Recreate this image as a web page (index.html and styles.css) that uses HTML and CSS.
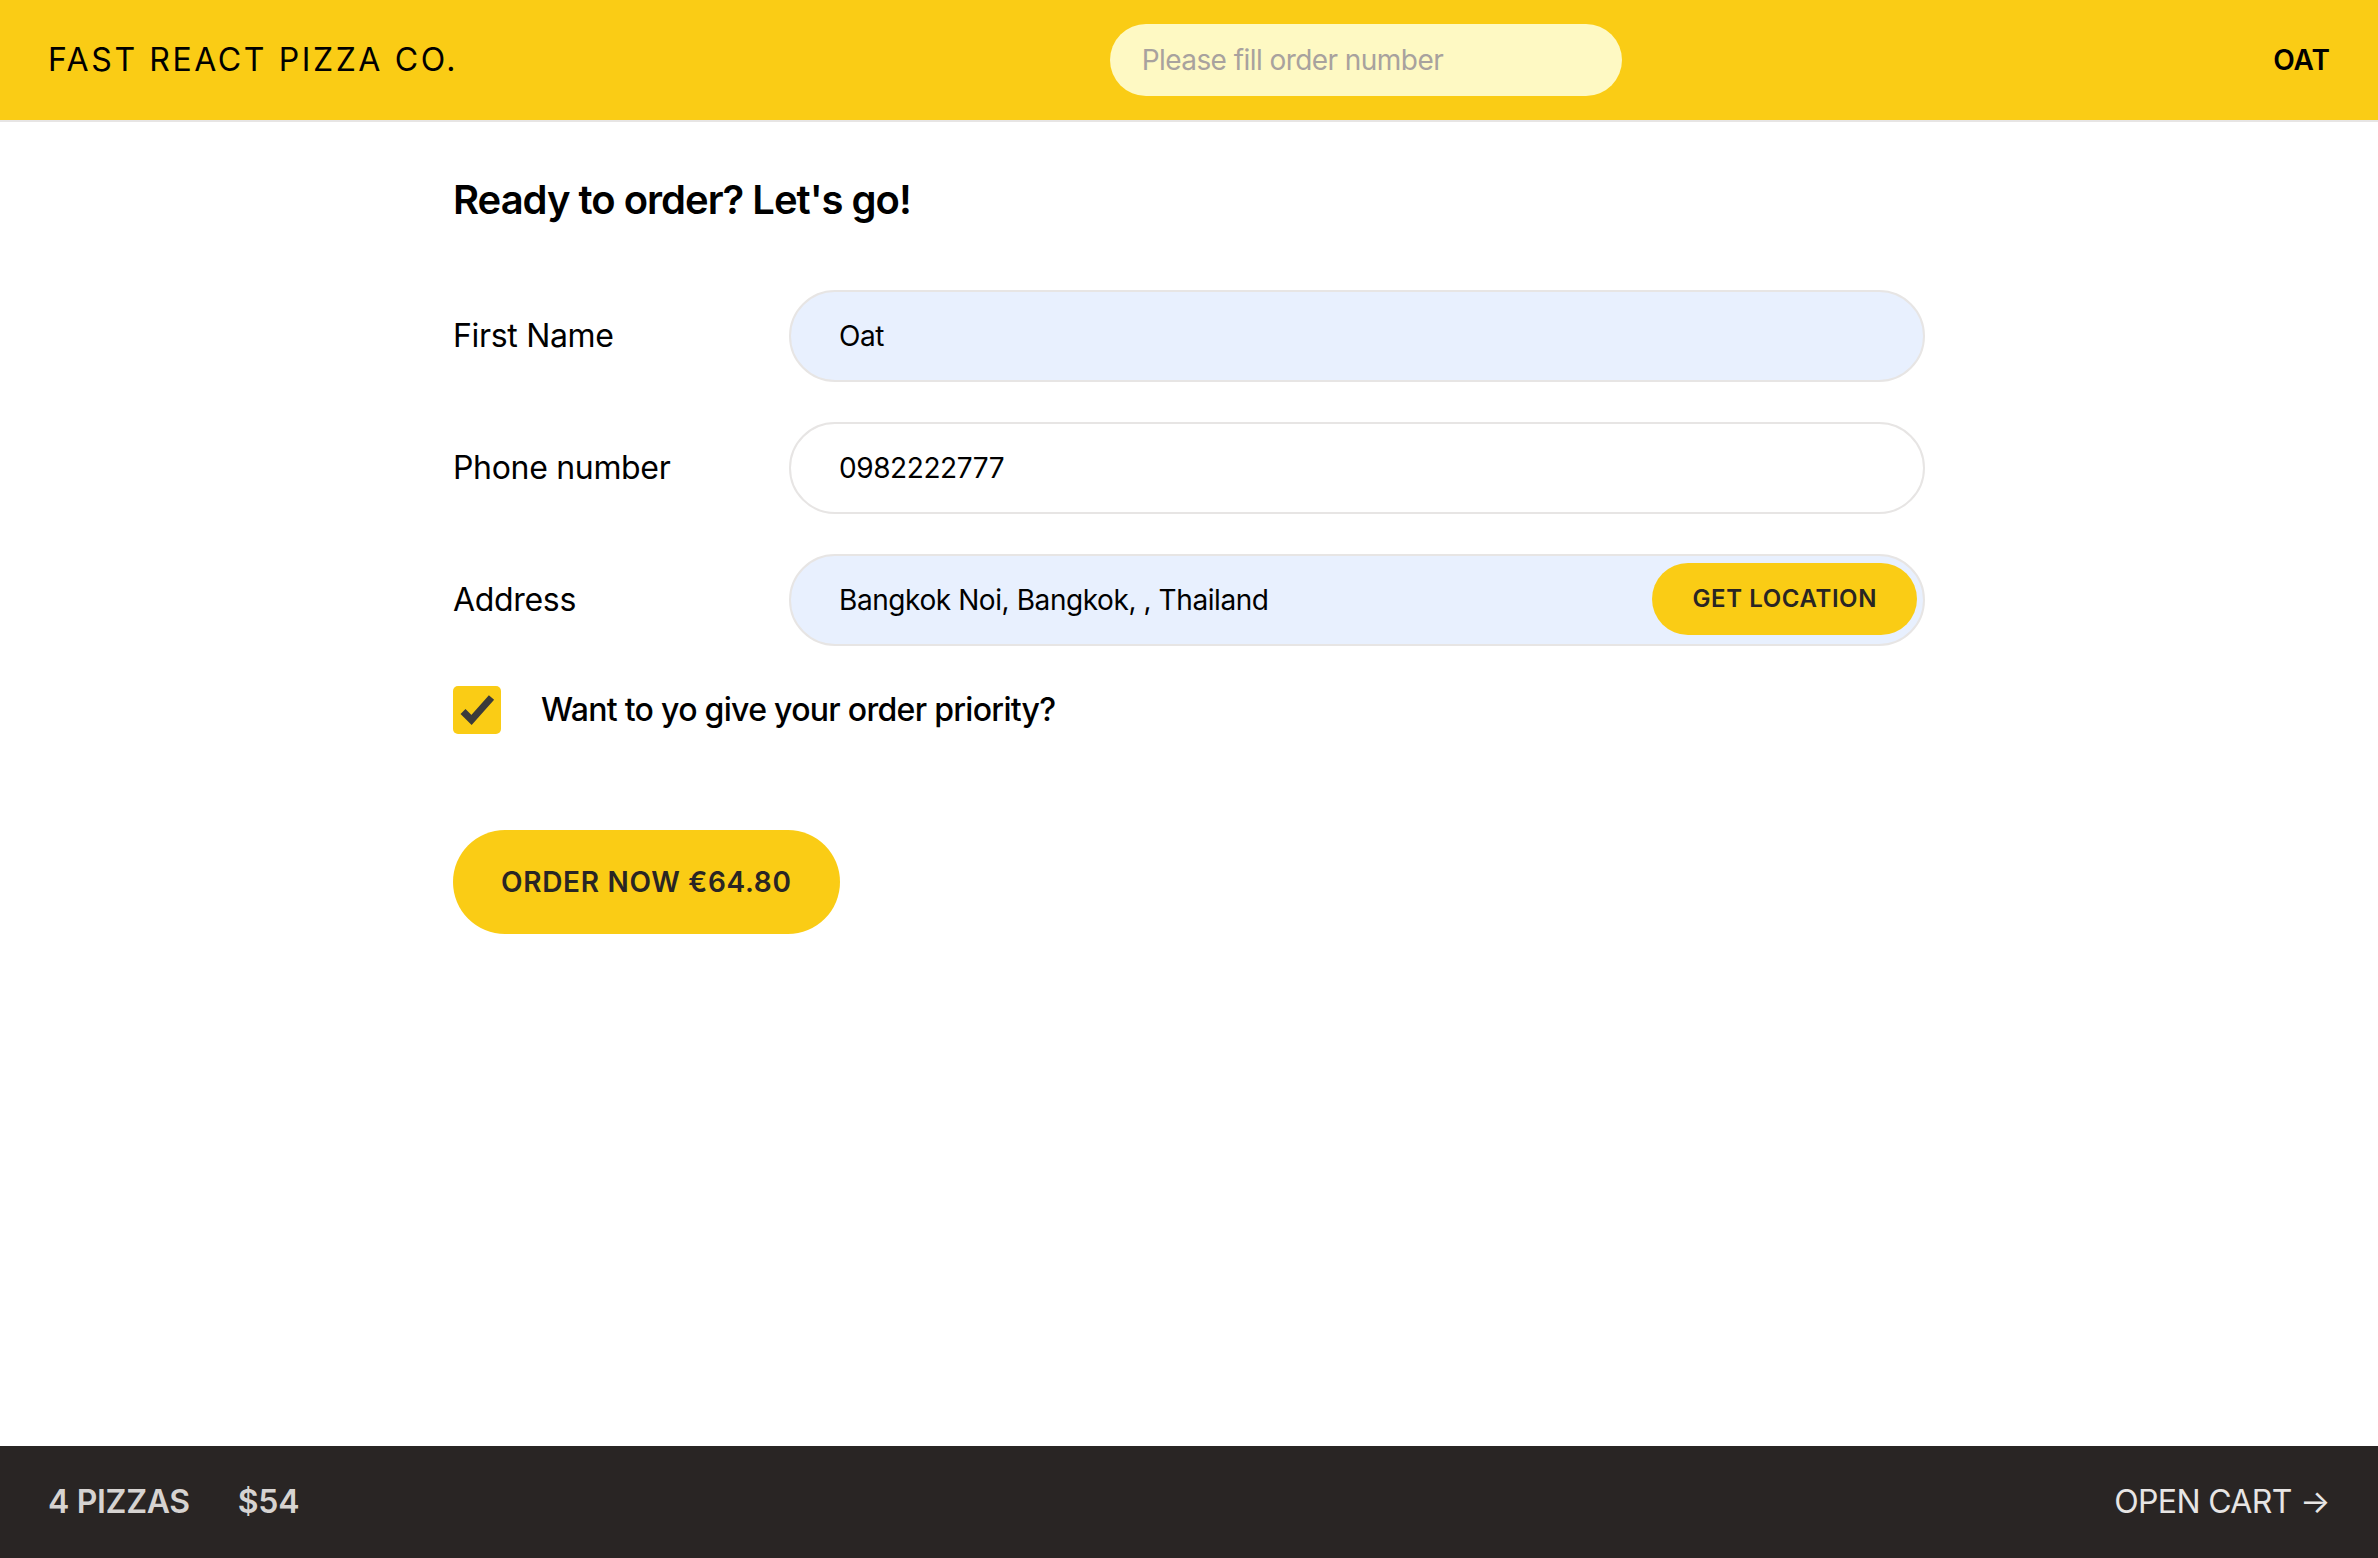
FILE: index.html
```html
<!DOCTYPE html>
<html lang="en">
<head>
<meta charset="utf-8">
<title>Fast React Pizza Co.</title>
<link rel="stylesheet" href="styles.css">
</head>
<body>
<div class="layout">
  <header class="header">
    <a class="logo" href="#">Fast React Pizza Co.</a>
    <form class="search">
      <input class="search-input" type="text" placeholder="Please fill order number">
    </form>
    <div class="username">Oat</div>
  </header>

  <main class="main">
    <h2 class="title">Ready to order? Let's go!</h2>
    <form class="order-form">
      <div class="row">
        <label class="row-label">First Name</label>
        <div class="row-field">
          <input class="input input-autofill" type="text" value="Oat">
        </div>
      </div>
      <div class="row">
        <label class="row-label">Phone number</label>
        <div class="row-field">
          <input class="input" type="tel" value="0982222777">
        </div>
      </div>
      <div class="row">
        <label class="row-label">Address</label>
        <div class="row-field row-field-rel">
          <input class="input input-autofill" type="text" value="Bangkok Noi, Bangkok, , Thailand">
          <span class="loc-btn">Get location</span>
        </div>
      </div>
      <div class="priority">
        <span class="checkbox">
          <svg viewBox="0 0 48 48" width="48" height="48"><polyline points="10,25.5 18.5,34 38.5,11.5" fill="none" stroke="#3b3b3b" stroke-width="7" stroke-linejoin="miter"/></svg>
        </span>
        <label class="priority-label">Want to yo give your order priority?</label>
      </div>
      <div>
        <span class="order-btn">Order now €64.80</span>
      </div>
    </form>
  </main>

  <footer class="cart">
    <p class="cart-summary">
      <span class="cart-count">4 pizzas</span>
      <span class="cart-total">$54</span>
    </p>
    <a class="cart-link" href="#">Open cart &rarr;</a>
  </footer>
</div>
</body>
</html>
```

FILE: styles.css
```css
* { box-sizing: border-box; }
html, body { margin: 0; padding: 0; }
body {
  font-family: Inter, "Noto Sans", sans-serif;
  color: #000;
  background: #fff;
  letter-spacing: -0.02em;
}
.layout {
  display: grid;
  grid-template-rows: auto 1fr auto;
  height: 1558px;
}
.header {
  display: flex;
  align-items: center;
  justify-content: space-between;
  background: #facc15;
  padding: 24px 48px;
  border-bottom: 2px solid #e7e5e4;
}
.logo {
  font-size: 32px;
  line-height: 48px;
  letter-spacing: 2.6px;
  text-transform: uppercase;
  color: #000;
  text-decoration: none;
}
.search { margin: 0; }
.search-input {
  display: block;
  width: 512px;
  height: 72px;
  border: none;
  border-radius: 9999px;
  background: #fef9c3;
  padding: 0 32px;
  font-family: Inter, sans-serif;
  font-size: 28px;
  letter-spacing: -0.02em;
  color: #292524;
  outline: none;
}
.search-input::placeholder { color: #a8a29e; }
.username {
  font-size: 28px;
  font-weight: 600;
  text-transform: uppercase;
  line-height: 40px;
  letter-spacing: 0;
}
.main {
  width: 100%;
  max-width: 1536px;
  margin: 0 auto;
  padding: 48px 32px;
}
.title {
  margin: 2px 0 62px;
  font-size: 40px;
  line-height: 56px;
  font-weight: 600;
  letter-spacing: -0.025em;
}
.order-form { margin: 0; }
.row {
  display: flex;
  align-items: center;
  gap: 16px;
  margin-bottom: 40px;
}
.row-label {
  flex: 0 0 320px;
  font-size: 32px;
  line-height: 48px;
}
.row-field { flex: 1 1 auto; }
.row-field-rel { position: relative; }
.input {
  display: block;
  width: 100%;
  height: 92px;
  border: 2px solid #e7e5e4;
  border-radius: 9999px;
  background: #fff;
  padding: 0 48px;
  font-family: Inter, sans-serif;
  font-size: 28px;
  letter-spacing: -0.015em;
  color: #000;
  outline: none;
}
.input-autofill { background: #e8f0fe; }
.loc-btn {
  position: absolute;
  top: 9px;
  right: 8px;
  display: inline-block;
  background: #facc15;
  color: #292524;
  border-radius: 9999px;
  padding: 20px 40px;
  font-size: 24px;
  line-height: 32px;
  font-weight: 600;
  letter-spacing: 0.025em;
  text-transform: uppercase;
}
.priority {
  display: flex;
  align-items: center;
  gap: 40px;
  margin-bottom: 96px;
}
.checkbox {
  display: block;
  width: 48px;
  height: 48px;
  background: #facc15;
  border-radius: 5px;
}
.checkbox svg { display: block; }
.priority-label {
  font-size: 32px;
  line-height: 48px;
  font-weight: 500;
  letter-spacing: -0.022em;
}
.order-btn {
  display: inline-block;
  background: #facc15;
  color: #292524;
  border-radius: 9999px;
  padding: 32px 48px;
  font-size: 28px;
  line-height: 40px;
  font-weight: 600;
  letter-spacing: 0.025em;
  text-transform: uppercase;
}
.cart {
  display: flex;
  align-items: center;
  justify-content: space-between;
  background: #292524;
  color: #e7e5e4;
  padding: 32px 48px;
  font-size: 32px;
  line-height: 48px;
  text-transform: uppercase;
}
.cart-summary {
  margin: 0;
  display: flex;
  gap: 48px;
  font-weight: 600;
  color: #d6d3d1;
  letter-spacing: -0.01em;
}
.cart-link {
  color: #e7e5e4;
  text-decoration: none;
  letter-spacing: -0.02em;
}
```
